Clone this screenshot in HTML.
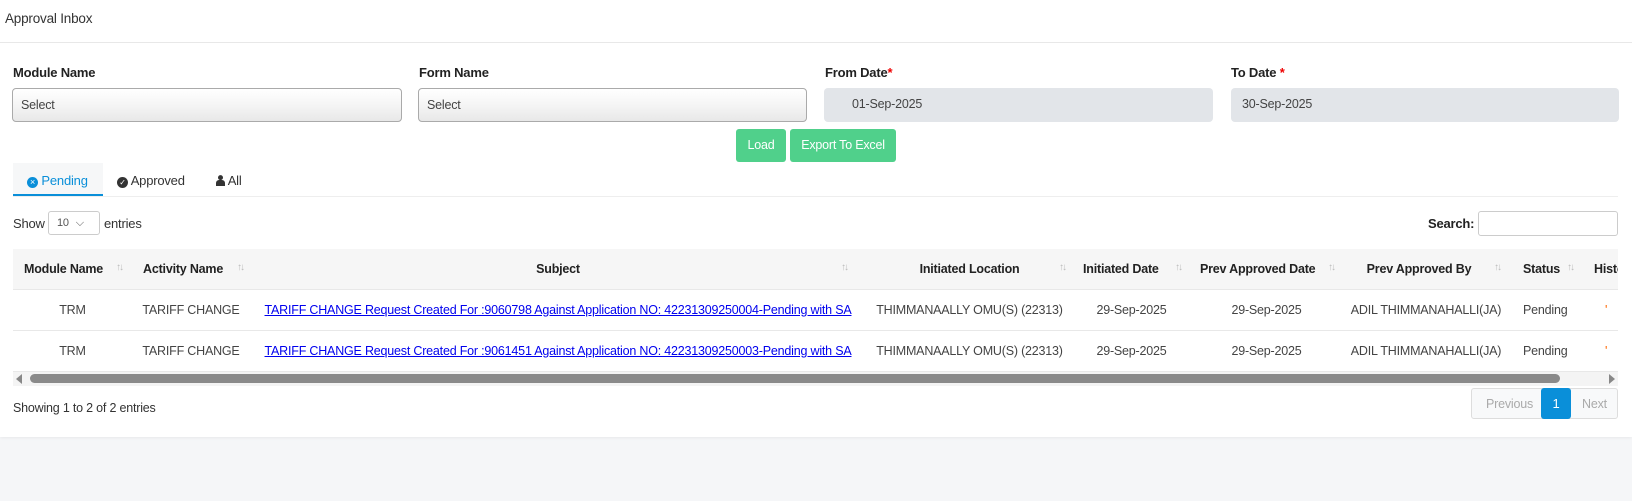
<!DOCTYPE html>
<html><head><meta charset="utf-8"><style>
*{box-sizing:border-box;margin:0;padding:0}
body{width:1632px;height:501px;background:#f5f6f8;font-family:"Liberation Sans",sans-serif;font-size:13px;color:#333;position:relative;overflow:hidden;letter-spacing:-0.2px}
.card{position:absolute;left:0;top:0;width:1632px;height:437px;background:#fff;box-shadow:0 1px 3px rgba(0,0,0,.06)}
.a{position:absolute;white-space:nowrap}
.lbl{font-weight:bold;color:#222;font-size:13px}
.sel{position:absolute;height:34px;border:1px solid #aaa;border-radius:4px;background:linear-gradient(#fff 0%,#f5f5f5 50%,#e8e8e8 100%);padding:9px 8px;font-size:12.5px;color:#444}
.dt{position:absolute;height:34px;background:#e2e5e9;border-radius:4px;padding:9px 10px;font-size:12.5px;color:#444}
.btn{position:absolute;top:129px;height:33px;background:#50d08b;color:#fff;border-radius:3px;font-size:12.5px;text-align:center;line-height:33px}
table{position:absolute;left:13px;top:249px;width:1605px;border-collapse:collapse;table-layout:fixed}
th{height:40px;background:#f6f6f6;font-weight:bold;color:#222;font-size:12.5px;position:relative;white-space:nowrap;overflow:hidden}
td{height:41px;border-top:1px solid #e8e8e8;text-align:center;white-space:nowrap;overflow:hidden;font-size:12.5px;color:#444}
.s{position:absolute;top:13px;color:#bbb;font-size:10px;letter-spacing:-2px}
a{color:#0000ee;letter-spacing:-0.2px;font-size:12.5px}
</style></head><body>
<div class="card"></div>
<div class="a" style="left:5px;top:11px;font-size:13.5px;color:#333">Approval Inbox</div>
<div class="a" style="left:0;top:42px;width:1632px;height:1px;background:#e8e8e8"></div>

<div class="a lbl" style="left:13px;top:65px">Module Name</div>
<div class="a lbl" style="left:419px;top:65px">Form Name</div>
<div class="a lbl" style="left:825px;top:65px">From Date<span style="color:#e00">*</span></div>
<div class="a lbl" style="left:1231px;top:65px">To Date <span style="color:#e00">*</span></div>
<div class="sel" style="left:12px;top:88px;width:390px">Select</div>
<div class="sel" style="left:418px;top:88px;width:389px">Select</div>
<div class="dt" style="left:824px;top:88px;width:389px;padding-left:28px">01-Sep-2025</div>
<div class="dt" style="left:1231px;top:88px;width:388px;padding-left:11px">30-Sep-2025</div>
<div class="btn" style="left:736px;width:50px">Load</div>
<div class="btn" style="left:790px;width:106px">Export To Excel</div>

<div class="a" style="left:13px;top:163px;width:90px;height:33px;background:#f6f7f8;border-bottom:2px solid #0a8fd9"></div>
<div class="a" style="left:27px;top:173px;color:#0a8fd9"><span style="display:inline-block;width:11px;height:11px;border-radius:50%;background:#0a8fd9;color:#fff;font-size:9px;line-height:11px;text-align:center;vertical-align:0px">×</span> Pending</div>
<div class="a" style="left:117px;top:173px;color:#333"><span style="display:inline-block;width:11px;height:11px;border-radius:50%;background:#333;color:#fff;font-size:8px;line-height:11px;text-align:center;vertical-align:0px">✓</span> Approved</div>
<div class="a" style="left:216px;top:173px;color:#333"><svg width="9" height="11" viewBox="0 0 9 11" style="vertical-align:-1px"><circle cx="4.5" cy="2.6" r="2.5" fill="#333"/><path d="M0 11V8a3 3 0 0 1 3-3h3a3 3 0 0 1 3 3v3z" fill="#333"/></svg> All</div>
<div class="a" style="left:13px;top:196px;width:1605px;height:1px;background:#eee"></div>

<div class="a" style="left:13px;top:216px">Show</div>
<div class="a" style="left:48px;top:211px;width:52px;height:24px;border:1px solid #ccc;border-radius:3px;font-size:11px;padding:5px 8px;color:#555">10 <span style="margin-left:4px">⌵</span></div>
<div class="a" style="left:104px;top:216px">entries</div>
<div class="a" style="left:1428px;top:216px;font-weight:bold;color:#222">Search:</div>
<div class="a" style="left:1478px;top:211px;width:140px;height:25px;border:1px solid #ccc;border-radius:3px"></div>

<table>
<colgroup><col style="width:119px"><col style="width:118px"><col style="width:616px"><col style="width:207px"><col style="width:117px"><col style="width:153px"><col style="width:166px"><col style="width:71px"><col style="width:38px"></colgroup>
<tr>
<th style="text-align:left;padding-left:11px">Module Name<span class="s" style="left:103px">↑↓</span></th>
<th style="text-align:left;padding-left:11px">Activity Name<span class="s" style="left:105px">↑↓</span></th>
<th>Subject<span class="s" style="left:591px">↑↓</span></th>
<th>Initiated Location<span class="s" style="left:193px">↑↓</span></th>
<th style="text-align:left;padding-left:10px">Initiated Date<span class="s" style="left:102px">↑↓</span></th>
<th style="text-align:left;padding-left:10px">Prev Approved Date<span class="s" style="left:138px">↑↓</span></th>
<th style="padding-right:14px">Prev Approved By<span class="s" style="left:151px">↑↓</span></th>
<th style="text-align:left;padding-left:14px">Status<span class="s" style="left:58px">↑↓</span></th>
<th style="text-align:left;padding-left:14px">History</th>
</tr>
<tr><td>TRM</td><td>TARIFF CHANGE</td><td><a href="#">TARIFF CHANGE Request Created For :9060798 Against Application NO: 42231309250004-Pending with SA</a></td><td>THIMMANAALLY OMU(S) (22313)</td><td>29-Sep-2025</td><td>29-Sep-2025</td><td>ADIL THIMMANAHALLI(JA)</td><td style="text-align:left;padding-left:14px">Pending</td><td style="text-align:left;padding-left:25px;color:#f60">'</td></tr>
<tr><td>TRM</td><td>TARIFF CHANGE</td><td><a href="#">TARIFF CHANGE Request Created For :9061451 Against Application NO: 42231309250003-Pending with SA</a></td><td>THIMMANAALLY OMU(S) (22313)</td><td>29-Sep-2025</td><td>29-Sep-2025</td><td>ADIL THIMMANAHALLI(JA)</td><td style="text-align:left;padding-left:14px">Pending</td><td style="text-align:left;padding-left:25px;color:#f60">'</td></tr>
</table>
<div class="a" style="left:13px;top:371px;width:1605px;height:15px;background:#f4f4f4;border-top:1px solid #e8e8e8"></div>
<div class="a" style="left:16px;top:374px;width:0;height:0;border-top:5px solid transparent;border-bottom:5px solid transparent;border-right:6px solid #888"></div>
<div class="a" style="left:30px;top:374px;width:1530px;height:9px;border-radius:5px;background:#8a8a8a"></div>
<div class="a" style="left:1609px;top:374px;width:0;height:0;border-top:5px solid transparent;border-bottom:5px solid transparent;border-left:6px solid #888"></div>

<div class="a" style="left:13px;top:401px;font-size:12.5px">Showing 1 to 2 of 2 entries</div>
<div class="a" style="left:1471px;top:388px;width:147px;height:31px;border:1px solid #ddd;border-radius:3px;background:#f8f9fa"></div>
<div class="a" style="left:1486px;top:397px;color:#aaa;font-size:12.5px">Previous</div>
<div class="a" style="left:1541px;top:388px;width:30px;height:31px;background:#0a8fd9;border-radius:3px;color:#fff;text-align:center;line-height:31px">1</div>
<div class="a" style="left:1582px;top:397px;color:#aaa;font-size:12.5px">Next</div>
</body></html>
